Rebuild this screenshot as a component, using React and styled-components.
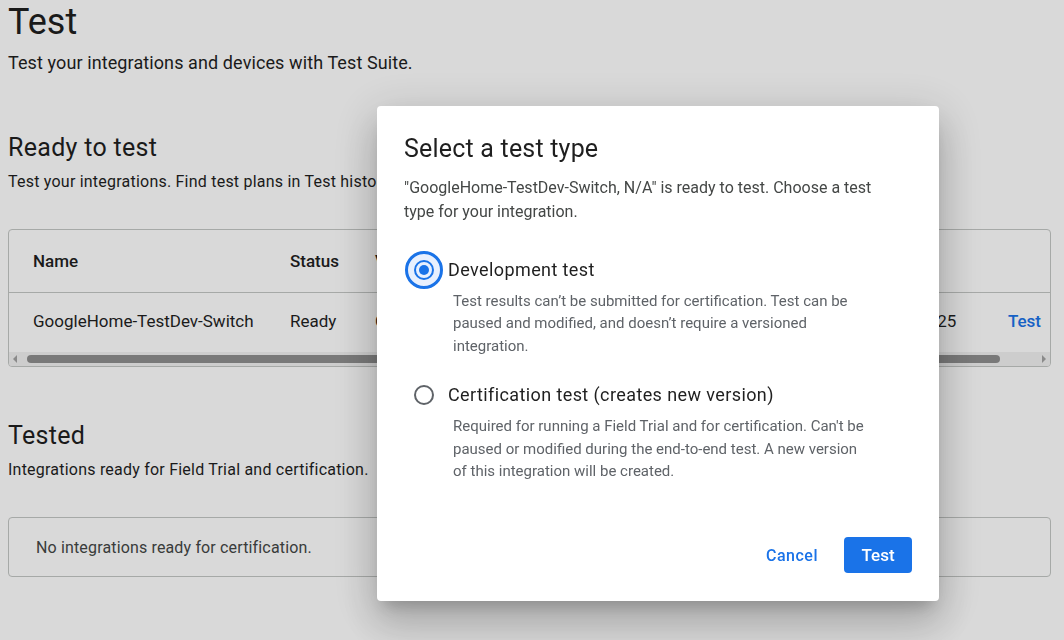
import React from "react"
import styled, { createGlobalStyle } from "styled-components"

const Global = createGlobalStyle`
    html, body {
        margin: 0;
        background: #ffffff;
    }
    body {
        font-family: Roboto, "Noto Sans", sans-serif;
        color: #1f1f1f;
    }
`

const Page = styled.main`
    padding: 0 13px 0 8px;
    height: 640px;
    box-sizing: border-box;
    overflow: hidden;
`

const PageTitle = styled.h1`
    margin: 0;
    font-size: 36px;
    line-height: 44px;
    font-weight: 400;
`

const Lead = styled.p`
    margin: 7px 0 0;
    font-size: 18px;
    line-height: 24px;
    letter-spacing: 0.1px;
`

const SectionTitle = styled.h2`
    margin: ${p => p.$top}px 0 0;
    font-size: 25px;
    line-height: 32px;
    font-weight: 400;
    letter-spacing: 0.3px;
`

const SectionText = styled.p`
    margin: 6px 0 0;
    font-size: 16px;
    line-height: 24px;
    letter-spacing: 0.22px;
`

const TableBox = styled.div`
    margin-top: 35px;
    border: 1px solid #c4c7c5;
    border-radius: 4px;
    overflow: hidden;
`

const Row = styled.div`
    display: grid;
    grid-template-columns: 257px 85px 1fr 96px 86px;
    align-items: center;
    height: ${p => p.$h}px;
    box-sizing: border-box;
    padding: 0 9px ${p => (p.$head ? 0 : 3)}px 24px;
    font-size: 17px;
    font-weight: ${p => (p.$head ? 500 : 400)};
    border-bottom: ${p => (p.$head ? "1px solid #c4c7c5" : "none")};
    white-space: nowrap;
`

const ActionLink = styled.a`
    justify-self: end;
    color: #1a73e8;
    font-weight: 500;
    text-decoration: none;
`

const ScrollBar = styled.div`
    display: flex;
    align-items: center;
    height: 14px;
    background: #f1f1f1;
    padding: 0 4px;
    gap: 4px;
`

const Arrow = styled.span`
    width: 0;
    height: 0;
    border-top: 4px solid transparent;
    border-bottom: 4px solid transparent;
    ${p =>
        p.$left
            ? "border-right: 4px solid #a3a3a3;"
            : "border-left: 4px solid #a3a3a3; margin-left: auto;"}
`

const Track = styled.div`
    flex: 1;
    height: 8px;
    padding-left: 6px;
    padding-right: 38px;
`

const Thumb = styled.div`
    height: 8px;
    border-radius: 4px;
    background: #8f8f8f;
`

const EmptyBox = styled.div`
    margin-top: 35px;
    height: 58px;
    border: 1px solid #c4c7c5;
    border-radius: 4px;
    display: flex;
    align-items: center;
    padding-left: 27px;
    font-size: 16px;
    letter-spacing: 0.15px;
    color: #444746;
`

const Scrim = styled.div`
    position: fixed;
    inset: 0;
    background: rgba(0, 0, 0, 0.15);
    display: flex;
    align-items: flex-start;
    padding: 106px 0 0 377px;
`

const Dialog = styled.div`
    width: 562px;
    height: 495px;
    box-sizing: border-box;
    background: #ffffff;
    border-radius: 4px;
    padding: 27px 27px 28px 27px;
    display: flex;
    flex-direction: column;
    box-shadow: 0 11px 15px -7px rgba(0, 0, 0, 0.2),
        0 24px 38px 3px rgba(0, 0, 0, 0.14), 0 9px 46px 8px rgba(0, 0, 0, 0.12);
`

const DialogTitle = styled.h2`
    margin: 0;
    font-size: 25px;
    line-height: 32px;
    font-weight: 400;
    letter-spacing: 0.2px;
    color: #1f1f1f;
`

const DialogText = styled.p`
    margin: 11px 0 0;
    max-width: 470px;
    font-size: 16px;
    line-height: 24px;
    color: #444746;
`

const Options = styled.div`
    display: flex;
    flex-direction: column;
    margin-top: 27px;
    gap: 19px;
`

const Option = styled.label`
    display: grid;
    grid-template-columns: 43px 1fr;
    align-items: center;
    margin-left: 1px;
`

const RadioHalo = styled.span`
    width: 38px;
    height: 38px;
    border-radius: 50%;
    display: flex;
    align-items: center;
    justify-content: center;
    box-sizing: border-box;
    ${p =>
        p.$focus
            ? "background: #e8f0fe; border: 3px solid #1a73e8;"
            : "background: transparent;"}
`

const RadioRing = styled.span`
    width: 20px;
    height: 20px;
    box-sizing: border-box;
    border-radius: 50%;
    border: 2px solid ${p => (p.$checked ? "#1a73e8" : "#5f6368")};
    display: flex;
    align-items: center;
    justify-content: center;

    &::after {
        content: "";
        width: 10px;
        height: 10px;
        border-radius: 50%;
        background: ${p => (p.$checked ? "#1a73e8" : "transparent")};
    }
`

const OptionLabel = styled.span`
    font-size: 18px;
    line-height: 24px;
    letter-spacing: 0.4px;
    color: #1f1f1f;
`

const OptionHelp = styled.p`
    grid-column: 2;
    margin: 1px 0 0 5px;
    font-size: 15px;
    line-height: 22.4px;
    color: #5f6368;
    max-width: 418px;
`

const Actions = styled.div`
    margin-top: auto;
    display: flex;
    justify-content: flex-end;
    align-items: center;
    gap: 26px;
`

const TextButton = styled.button`
    border: none;
    background: none;
    padding: 0;
    font-family: inherit;
    font-size: 16px;
    font-weight: 500;
    letter-spacing: 0.5px;
    color: #1a73e8;
`

const FilledButton = styled.button`
    border: none;
    border-radius: 4px;
    height: 36px;
    width: 68px;
    background: #1a73e8;
    color: #ffffff;
    font-family: inherit;
    font-size: 17px;
    font-weight: 500;
`

const options = [
    {
        label: "Development test",
        help: "Test results can’t be submitted for certification. Test can be paused and modified, and doesn’t require a versioned integration.",
        checked: true,
    },
    {
        label: "Certification test (creates new version)",
        help: "Required for running a Field Trial and for certification. Can't be paused or modified during the end-to-end test. A new version of this integration will be created.",
        checked: false,
    },
]

export default function App() {
    return (
        <>
            <Global />
            <Page>
                <PageTitle>Test</PageTitle>
                <Lead>Test your integrations and devices with Test Suite.</Lead>

                <SectionTitle $top={57}>Ready to test</SectionTitle>
                <SectionText>
                    Test your integrations. Find test plans in Test history.
                </SectionText>

                <TableBox>
                    <Row $head $h={63}>
                        <span>Name</span>
                        <span>Status</span>
                        <span>Version</span>
                        <span>Updated</span>
                        <span />
                    </Row>
                    <Row $h={59}>
                        <span>GoogleHome-TestDev-Switch</span>
                        <span>Ready</span>
                        <span>Cloud</span>
                        <span>Jun 12, 2025</span>
                        <ActionLink href="#">Test</ActionLink>
                    </Row>
                    <ScrollBar>
                        <Arrow $left />
                        <Track>
                            <Thumb />
                        </Track>
                        <Arrow />
                    </ScrollBar>
                </TableBox>

                <SectionTitle $top={53}>Tested</SectionTitle>
                <SectionText>
                    Integrations ready for Field Trial and certification.
                </SectionText>
                <EmptyBox>No integrations ready for certification.</EmptyBox>
            </Page>

            <Scrim>
                <Dialog role="dialog">
                    <DialogTitle>Select a test type</DialogTitle>
                    <DialogText>
                        "GoogleHome-TestDev-Switch, N/A" is ready to test. Choose a
                        test type for your integration.
                    </DialogText>
                    <Options>
                        {options.map(o => (
                            <Option key={o.label}>
                                <RadioHalo $focus={o.checked}>
                                    <RadioRing $checked={o.checked} />
                                </RadioHalo>
                                <OptionLabel>{o.label}</OptionLabel>
                                <OptionHelp>{o.help}</OptionHelp>
                            </Option>
                        ))}
                    </Options>
                    <Actions>
                        <TextButton>Cancel</TextButton>
                        <FilledButton>Test</FilledButton>
                    </Actions>
                </Dialog>
            </Scrim>
        </>
    )
}
